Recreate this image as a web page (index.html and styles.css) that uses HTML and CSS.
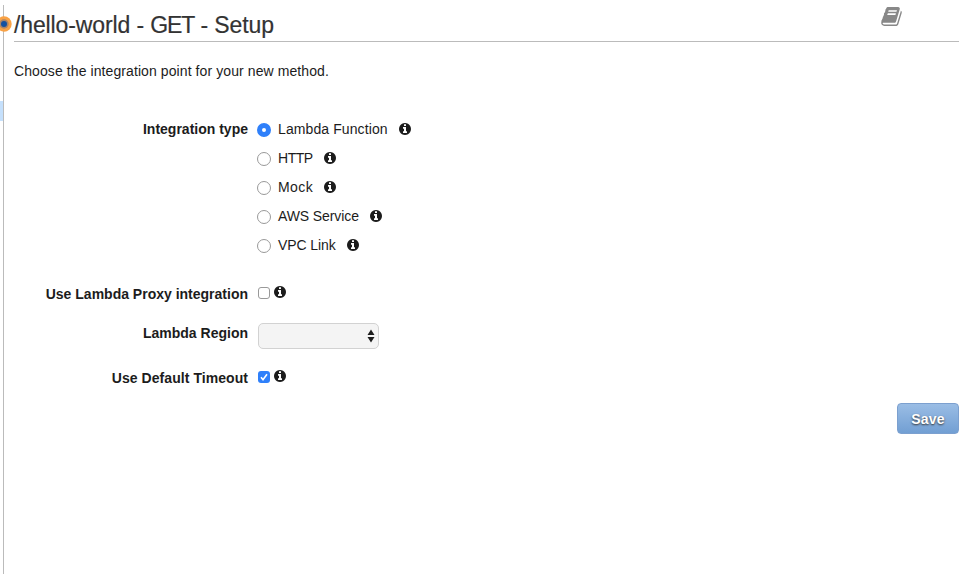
FILE: index.html
```
<!DOCTYPE html>
<html lang="en">
<head>
<meta charset="utf-8">
<title>Method setup</title>
<link rel="stylesheet" href="styles.css">
</head>
<body>
<svg class="defs" width="0" height="0" aria-hidden="true">
<symbol id="info" viewBox="0 128 1536 1536"><path d="M1024 1376v-160q0-14-9-23t-23-9h-96v-512q0-14-9-23t-23-9h-320q-14 0-23 9t-9 23v160q0 14 9 23t23 9h96v320h-96q-14 0-23 9t-9 23v160q0 14 9 23t23 9h448q14 0 23-9t9-23zm-128-896v-160q0-14-9-23t-23-9h-192q-14 0-23 9t-9 23v160q0 14 9 23t23 9h192q14 0 23-9t9-23zm640 416q0 209-103 385.5t-279.5 279.5-385.5 103-385.5-103-279.5-279.5-103-385.5 103-385.5 279.5-279.5 385.5-103 385.5 103 279.5 279.5 103 385.5z"/></symbol>
</svg>
<div class="page">
<aside class="tree"><div class="selected"></div></aside>
<svg class="handle" viewBox="0 0 16 16"><circle cx="8" cy="8" r="7.7" fill="#f9a245"/><circle cx="8" cy="8" r="4.7" fill="#a98468"/><circle cx="8" cy="8" r="3" fill="#1450a0"/></svg>
<main class="content">
<header class="head">
<h1 class="title">/hello-world - <span class="verb">GET</span> - Setup</h1>
<svg class="book" viewBox="0 128 1664 1536"><path d="M1639 478q40 57 18 129l-275 906q-19 64-76.5 107.5t-122.5 43.5h-923q-77 0-148.5-53.5t-99.5-131.5q-24-67-2-127 0-4 3-27t4-37q1-8-3-21.5t-3-19.5q2-11 8-21t16.5-23.5 16.5-23.5q23-38 45-91.5t30-91.5q3-10 .5-30t-.5-28q3-11 17-28t17-23q21-36 42-92t25-90q1-9-2.5-32t.5-28q4-13 22-30.5t22-22.5q19-26 42.5-84.5t27.5-96.5q1-8-3-25.5t-2-26.5q2-8 9-18t18-23 17-21q8-12 16.5-30.5t15-35 16-36 19.5-32 26.5-23.5 36-11.5 47.5 5.5l-1 3q38-9 51-9h761q74 0 114 56t18 130l-274 906q-36 119-71.5 153.5t-128.5 34.5h-869q-27 0-38 15-11 16-1 43 24 70 144 70h923q29 0 56-15.5t35-41.5l300-987q7-22 5-57 38 15 59 43zm-1064 2q-4 13 2 22.5t20 9.5h608q13 0 25.5-9.5t16.5-22.5l21-64q4-13-2-22.5t-20-9.5h-608q-13 0-25.5 9.5t-16.5 22.5zm-83 256q-4 13 2 22.5t20 9.5h608q13 0 25.5-9.5t16.5-22.5l21-64q4-13-2-22.5t-20-9.5h-608q-13 0-25.5 9.5t-16.5 22.5z"/></svg>
</header>
<p class="intro">Choose the integration point for your new method.</p>
<form class="form">
<div class="row types">
<span class="label l-type">Integration type</span>
<div class="options">
<label class="option"><span class="radio on"></span><span class="text o1">Lambda Function</span><svg class="info"><use href="#info"/></svg></label>
<label class="option"><span class="radio"></span><span class="text o2">HTTP</span><svg class="info"><use href="#info"/></svg></label>
<label class="option"><span class="radio"></span><span class="text o3">Mock</span><svg class="info"><use href="#info"/></svg></label>
<label class="option"><span class="radio"></span><span class="text o4">AWS Service</span><svg class="info"><use href="#info"/></svg></label>
<label class="option"><span class="radio"></span><span class="text o5">VPC Link</span><svg class="info"><use href="#info"/></svg></label>
</div>
</div>
<div class="row proxy"><span class="label l-proxy">Use Lambda Proxy integration</span><span class="check"></span><svg class="info"><use href="#info"/></svg></div>
<div class="row region"><span class="label l-region">Lambda Region</span><div class="select"><svg class="arrows" viewBox="0 0 8 14"><path d="M4 0.5 7.5 6H.5zM4 13.5 7.5 8H.5z"/></svg></div></div>
<div class="row timeout"><span class="label l-timeout">Use Default Timeout</span><span class="check checked"><svg viewBox="0 0 12 12"><path d="M3 6.3 5 8.7 9 3.2"/></svg></span><svg class="info"><use href="#info"/></svg></div>
<div class="actions"><button class="save" type="button">Save</button></div>
</form>
</main>
</div>
</body>
</html>
```
FILE: styles.css
```
* { box-sizing: border-box; }
body { margin: 0; background: #fff; color: #1c1c1c; font: 14px/20px "Liberation Sans", Arial, sans-serif; }
.defs { position: absolute; }
.page { position: relative; display: flex; height: 574px; padding-top: 5px; overflow: hidden; }
.tree { width: 4px; flex: none; padding-top: 96px; border-right: 1px solid #bbb; }
.selected { height: 20px; background: #c5e0fc; }
.handle { position: absolute; left: -4px; top: 16px; width: 16px; height: 16px; }
.content { flex: 1; padding: 0 7px 0 10px; }
.head { display: flex; justify-content: space-between; align-items: flex-start; height: 37px; padding-right: 57px; border-bottom: 1px solid #bbb; }
.title { margin: 5px 0 0; font-size: 23px; line-height: 30px; font-weight: 400; color: #333; letter-spacing: -0.12px; white-space: nowrap; -webkit-text-stroke: 0.2px #333; }
.verb { letter-spacing: -1.1px; }
.book { width: 21px; height: 19px; margin-top: 2px; fill: #888; }
.intro { margin: 19px 0 0; letter-spacing: 0.09px; white-space: nowrap; }
.form { margin-top: 38px; }
.row { display: flex; align-items: flex-start; }
.label { width: 234px; margin-right: 10px; text-align: right; font-weight: 700; white-space: nowrap; }
.l-timeout { letter-spacing: 0.06px; }
.options { display: flex; flex-direction: column; gap: 9px; margin-left: -1px; }
.option { display: flex; align-items: center; height: 20px; }
.radio { width: 14px; height: 14px; margin: 2px 7px 0 0; border: 1px solid #999; border-radius: 50%; }
.radio.on { border: 5px solid #2f80fa; }
.text { margin-right: 11px; white-space: nowrap; }
.o1 { letter-spacing: 0.1px; }
.o2 { letter-spacing: -0.45px; }
.o3 { letter-spacing: 0.4px; }
.o4, .o5 { letter-spacing: -0.1px; }
.info { width: 12px; height: 12px; fill: #1c1c1c; }
.proxy { margin-top: 29px; height: 20px; }
.check { width: 12px; height: 12px; margin: 3px 4px 0 0; border: 1px solid #999; border-radius: 3px; }
.proxy .info, .timeout .info { margin-top: 2px; }
.checked { border: 0; background: #2f80fa; }
.checked svg { display: block; fill: none; stroke: #fff; stroke-width: 1.6; }
.region { margin-top: 19px; height: 26px; }
.select { display: flex; align-items: center; justify-content: flex-end; width: 121px; height: 26px; padding-right: 3px; background: #f4f4f4; border: 1px solid #d2d2d2; border-radius: 5px; }
.arrows { width: 8px; height: 14px; fill: #1c1c1c; }
.timeout { margin-top: 19px; height: 20px; }
.actions { display: flex; justify-content: flex-end; margin-top: 15px; }
.save { width: 62px; height: 31px; padding: 0; border: 1px solid #7ca0cf; border-radius: 4px; background: linear-gradient(#9abde5, #729fd3); color: #fff; font: 700 14px/20px "Liberation Sans", Arial, sans-serif; letter-spacing: 0.2px; text-shadow: 0 1px 2px #333; }
```
